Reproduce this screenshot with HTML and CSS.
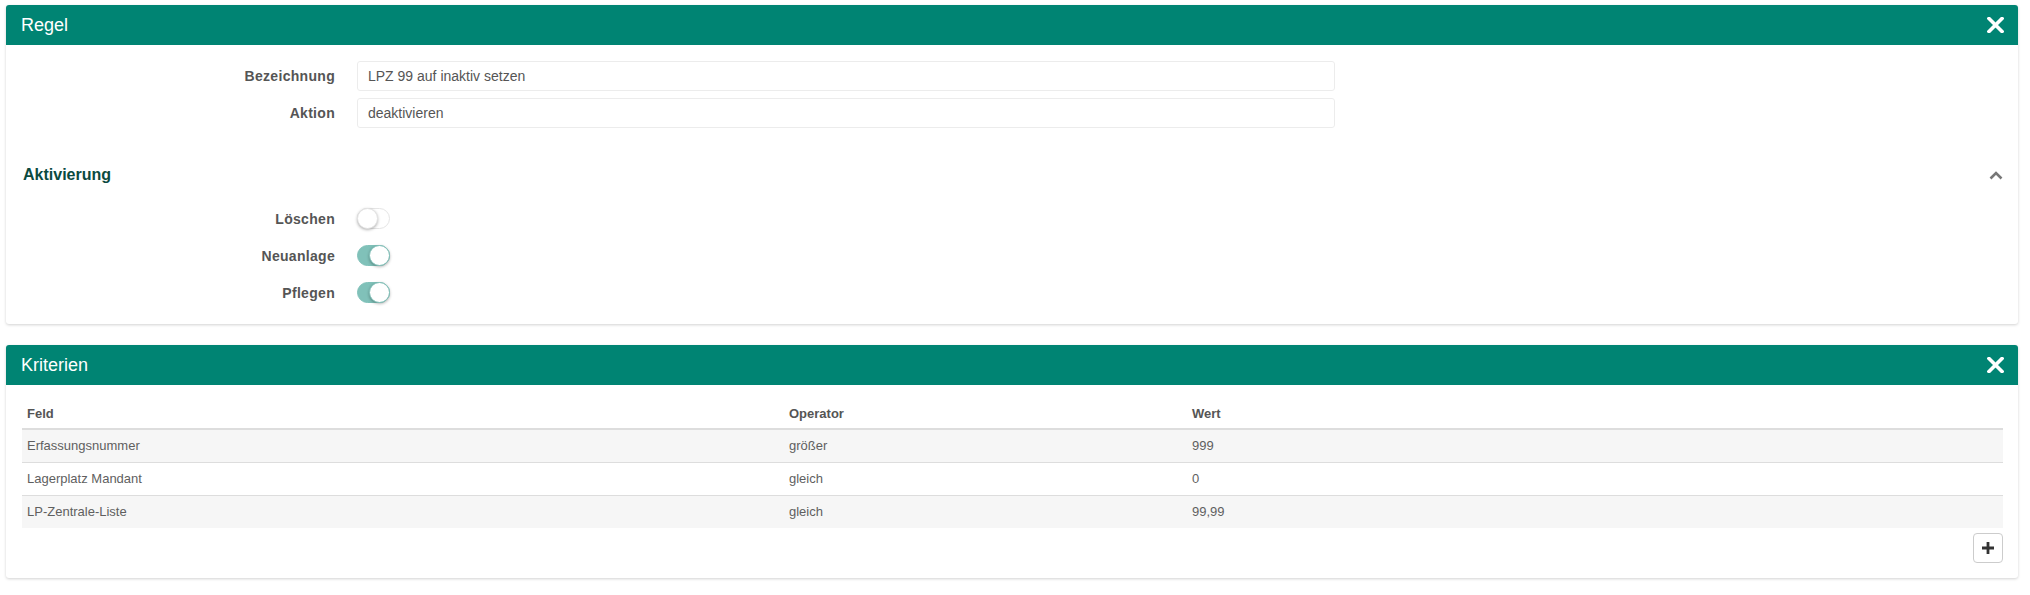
FILE: index.html
```html
<!DOCTYPE html>
<html>
	<head>
		<meta charset="utf-8">
		<title>Regel</title>
		<link rel="stylesheet" href="styles.css">
	</head>
	<body>
		<div class="card">
			<div class="cardhead">
				<span class="cardtitle">Regel</span>
				<svg class="close" width="17" height="16" viewBox="0 0 17 16"><path d="M2 1.5 L15 14.5 M15 1.5 L2 14.5" stroke="#fff" stroke-width="3.6" stroke-linecap="square"/></svg>
			</div>
			<div class="cardbody rulebody">
				<div class="form">
					<label class="label">Bezeichnung</label>
					<div class="input">LPZ 99 auf inaktiv setzen</div>
					<label class="label">Aktion</label>
					<div class="input">deaktivieren</div>
				</div>

				<div class="section">
					<span class="sectiontitle">Aktivierung</span>
					<svg class="chevron" width="14" height="9" viewBox="0 0 14 9"><path d="M1.5 7.5 L7 2 L12.5 7.5" fill="none" stroke="#777" stroke-width="2.6"/></svg>
				</div>

				<div class="toggles">
					<label class="label">Löschen</label>
					<div class="rowtoggle"><span class="switch"><span class="knob"></span></span></div>
					<label class="label">Neuanlage</label>
					<div class="rowtoggle"><span class="switch on"><span class="knob"></span></span></div>
					<label class="label">Pflegen</label>
					<div class="rowtoggle"><span class="switch on"><span class="knob"></span></span></div>
				</div>
			</div>
		</div>

		<div class="card">
			<div class="cardhead">
				<span class="cardtitle">Kriterien</span>
				<svg class="close" width="17" height="16" viewBox="0 0 17 16"><path d="M2 1.5 L15 14.5 M15 1.5 L2 14.5" stroke="#fff" stroke-width="3.6" stroke-linecap="square"/></svg>
			</div>
			<div class="cardbody critbody">
				<table class="crit">
					<colgroup>
						<col class="colfeld">
						<col class="colop">
						<col>
					</colgroup>
					<thead>
						<tr><th>Feld</th><th>Operator</th><th>Wert</th></tr>
					</thead>
					<tbody>
						<tr><td>Erfassungsnummer</td><td>größer</td><td>999</td></tr>
						<tr><td>Lagerplatz Mandant</td><td>gleich</td><td>0</td></tr>
						<tr><td>LP-Zentrale-Liste</td><td>gleich</td><td>99,99</td></tr>
					</tbody>
				</table>
				<div class="actions">
					<button class="add"><svg width="12" height="12" viewBox="0 0 12 12"><path d="M6 0 V12 M0 6 H12" stroke="#333" stroke-width="2.8"/></svg></button>
				</div>
			</div>
		</div>
	</body>
</html>
```

FILE: styles.css
```css
body{
	margin: 0;
	padding: 5px 12px 0 6px;
	background: #fff;
	font-family: "Liberation Sans", Arial, sans-serif;
	font-size: 14px;
	color: #555;
}

/* cards */
.card{
	background: #fff;
	border-radius: 3px;
	box-shadow: 0 1px 3px rgba(0,0,0,0.18);
	margin-bottom: 21px;
	overflow: hidden;
}
.cardhead{
	height: 40px;
	background-color: #008473;
	display: flex;
	align-items: center;
	justify-content: space-between;
	padding: 0 14px 0 15px;
}
.cardtitle{
	color: #fff;
	font-size: 18px;
}
.close{
	display: block;
}
.cardbody{
	padding: 16px 15px 13px 16px;
}

/* form rows */
.form, .toggles{
	display: grid;
	grid-template-columns: 313px 978px;
	column-gap: 22px;
}
.form{
	row-gap: 7px;
}
.label{
	font-weight: bold;
	letter-spacing: 0.3px;
	text-align: right;
	display: flex;
	align-items: center;
	justify-content: flex-end;
}
.input{
	height: 30px;
	box-sizing: border-box;
	border: 1px solid #ececec;
	border-radius: 3px;
	padding: 0 10px;
	display: flex;
	align-items: center;
	font-size: 14px;
	color: #555;
}

.section{
	display: flex;
	justify-content: space-between;
	align-items: center;
	height: 22px;
	margin-top: 36px;
	margin-bottom: 14px;
}
.sectiontitle{
	font-size: 16px;
	font-weight: bold;
	color: #0b4a3f;
	padding-left: 1px;
}

/* toggles */
.toggles{
	grid-auto-rows: 37px;
}
.rowtoggle{
	display: flex;
	align-items: center;
}
.switch{
	position: relative;
	width: 33px;
	height: 21px;
	box-sizing: border-box;
	border-radius: 11px;
	border: 1px solid #e5e5e5;
	background: #fff;
}
.knob{
	position: absolute;
	top: -1px;
	left: -1px;
	width: 21px;
	height: 21px;
	box-sizing: border-box;
	border-radius: 50%;
	background: #fff;
	border: 1px solid #e3e3e3;
	box-shadow: 0 1px 3px rgba(0,0,0,0.3);
}
.switch.on{
	background: #80c1b9;
	border-color: #80c1b9;
}
.switch.on .knob{
	left: 11px;
	border-color: #80c1b9;
}

/* table */
.critbody{
	padding: 15px 15px 15px 16px;
}
table.crit{
	width: 100%;
	border-collapse: collapse;
	table-layout: fixed;
	font-size: 13px;
}
col.colfeld{
	width: 762px;
}
col.colop{
	width: 403px;
}
.crit th{
	text-align: left;
	font-weight: bold;
	color: #555;
	padding: 5px 5px;
	line-height: 18px;
	border-bottom: 2px solid #dddddd;
}
.crit td{
	padding: 8px 5px;
	line-height: 16px;
	border-top: 1px solid #dddddd;
	color: #5f5f5f;
}
.crit tbody tr:nth-child(odd){
	background-color: #f6f6f6;
}

.actions{
	display: flex;
	justify-content: flex-end;
	margin-top: 5px;
}
button.add{
	width: 30px;
	height: 30px;
	border: 1px solid #cccccc;
	border-radius: 4px;
	background: #fff;
	display: flex;
	align-items: center;
	justify-content: center;
	padding: 0;
	cursor: pointer;
}
```
